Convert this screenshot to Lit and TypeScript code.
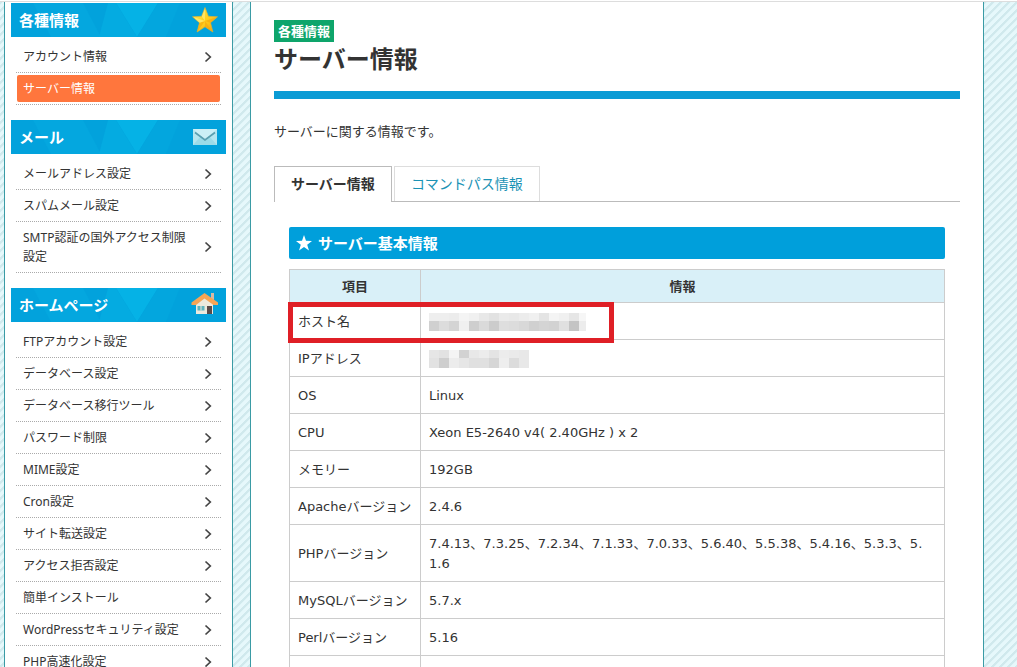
import { LitElement, html, svg, css } from "lit";
import { customElement, state } from "lit/decorators.js";
import { classMap } from "lit/directives/class-map.js";

const chevron = html`<svg class="chevron" viewBox="0 0 8 12" aria-hidden="true"><path d="M1.5 1.5 6.3 6 1.5 10.5" fill="none" stroke="#444" stroke-width="1.7"/></svg>`;

const icons: Record<string, unknown> = {
  star: html`<svg class="icon" viewBox="0 0 28 28" aria-hidden="true">
    <defs><linearGradient id="gold" x1="0" y1="0" x2="1" y2="1"><stop offset="0" stop-color="#ffe95a"/><stop offset=".5" stop-color="#ffd21f"/><stop offset="1" stop-color="#f59a0c"/></linearGradient></defs>
    <path d="M14 1.5 17.4 10.3 26.5 10.8 19.5 16.7 21.9 26 14 20.8 6.1 26 8.5 16.7 1.5 10.8 10.6 10.3Z" fill="url(#gold)" stroke="#d9b13a" stroke-width=".7"/>
    <path d="M14 15 26 11 19.5 16.7Z M14 15 21.9 26 14 20.8Z M14 15 6.1 26 8.5 16.7Z" fill="#f6a80f" opacity=".65"/>
    <path d="M14 15V2.5L10.8 10.5Z M14 15 2.5 11 8.5 16.7Z" fill="#fff08a" opacity=".6"/></svg>`,
  mail: html`<svg class="icon" viewBox="0 0 28 28" aria-hidden="true">
    <path d="M2 6h24v16H2Z" fill="#b5e6f0"/><path d="M2 22 10 13h8l8 9Z" fill="#9ddbe8"/>
    <path d="M2 6h24L14 16.500Z" fill="#cbeff6"/><path d="M4 9.500 14 17l10-7.500" fill="none" stroke="#5a9fb0" stroke-width="1.600"/></svg>`,
  house: html`<svg class="icon" viewBox="0 0 28 28" aria-hidden="true">
    <path d="M20 2h3v9h-3Z" fill="#d9b9a4"/><path d="M5 13 14 6l8 7v10H5Z" fill="#ece9dd"/>
    <path d="M13.500 2 27 11.500V14h-4.500L13.500 7.500 5 14H.500V11.500Z" fill="#f6a556"/>
    <path d="M6.500 15h7v4.500h-7Z" fill="#5fb3bd"/><path d="M9.500 15h1v4.500h-1Z" fill="#ece9dd"/><path d="M16 15h5v8h-5Z" fill="#5a4a48"/></svg>`,
};

interface Group { title: string; icon: string; items: string[] }

const groups: Group[] = [
  { title: "各種情報", icon: "star", items: ["アカウント情報", "サーバー情報"] },
  { title: "メール", icon: "mail", items: ["メールアドレス設定", "スパムメール設定", "SMTP認証の国外アクセス制限設定"] },
  {
    title: "ホームページ", icon: "house",
    items: ["FTPアカウント設定", "データベース設定", "データベース移行ツール", "パスワード制限", "MIME設定", "Cron設定",
      "サイト転送設定", "アクセス拒否設定", "簡単インストール", "WordPressセキュリティ設定", "PHP高速化設定"],
  },
];

@customElement("side-menu")
class SideMenu extends LitElement {
  static styles = css`
    :host { display: block; }
    .group { margin-bottom: 15px; }
    .title {
      position: relative; display: flex; align-items: center; justify-content: space-between;
      height: 34px; margin: 0; padding: 0 7px 0 8px; box-sizing: border-box; background: #02a2dc;
      color: #fff; font-size: 15px; font-weight: 700; line-height: 24px;
    }
    .facets { position: absolute; inset: 0; width: 100%; height: 100%; }
    .label, .icon { position: relative; }
    .icon { width: 28px; height: 28px; }
    .list { list-style: none; margin: 0; padding: 4px 5px 0; }
    .item { padding: 2px 1px; border-bottom: 1px dotted #aaa; }
    .link {
      display: flex; align-items: center; justify-content: space-between; gap: 12px;
      padding: 4px 8px 4px 6px; border-radius: 2px; color: #333; text-decoration: none;
      font-size: 12px; line-height: 19px;
    }
    .current { background: #ff763d; color: #fff; }
    .chevron { width: 8px; height: 12px; flex: none; }
  `;

  render() {
    return groups.map((g) => html`
      <section class="group">
        <h2 class="title">
          <svg class="facets" viewBox="0 0 215 34" preserveAspectRatio="none" aria-hidden="true">
            <path d="M22 0h50l18 34H40Z" fill="#04a7df"/>
            <path d="M105 0h42l-21 34Z" fill="#05b2e6"/>
            <path d="M105 0h-8L88 34h38Z" fill="#04abe1"/>
            <path d="M147 0h22l-14 34h-29Z" fill="#03a6de"/>
          </svg>
          <span class="label">${g.title}</span>${icons[g.icon]}
        </h2>
        <ul class="list">
          ${g.items.map((t) => {
            const current = t === "サーバー情報";
            return html`<li class="item"><a href="#" class=${classMap({ link: true, current })}>${t}${current ? "" : chevron}</a></li>`;
          })}
        </ul>
      </section>`);
  }
}

type Tone = number[];
const hostTones: Tone[] = [
  [238, 238, 236, 244, 240, 232, 226, 234, 232, 236, 240, 228, 244, 240, 230, 246],
  [208, 220, 212, 240, 206, 218, 204, 222, 220, 216, 208, 212, 210, 224, 196, 236],
];
const ipTones: Tone[] = [
  [230, 226, 244, 210, 232, 236, 228, 236, 234, 232],
  [226, 206, 236, 230, 224, 224, 214, 238, 220, 232],
];

const masked = (tones: Tone[], label: string, width: number) => html`
  <svg class="mask" role="img" aria-label=${label} width=${width} height="18">
    ${tones.map((r, y) => r.map((v, x) => svg`<rect x=${x * 10} y=${y * 8} width="10" height=${y ? 10 : 8} fill="rgb(${v},${v},${v})"/>`))}
  </svg>`;

const rows: [string, unknown][] = [
  ["ホスト名", masked(hostTones, "ホスト名", 157)],
  ["IPアドレス", masked(ipTones, "IPアドレス", 100)],
  ["OS", "Linux"],
  ["CPU", "Xeon E5-2640 v4( 2.40GHz ) x 2"],
  ["メモリー", "192GB"],
  ["Apacheバージョン", "2.4.6"],
  ["PHPバージョン", "7.4.13、7.3.25、7.2.34、7.1.33、7.0.33、5.6.40、5.5.38、5.4.16、5.3.3、5.1.6"],
  ["MySQLバージョン", "5.7.x"],
  ["Perlバージョン", "5.16"],
  ["", ""],
];

@customElement("app-root")
class AppRoot extends LitElement {
  @state() private tab = 0;

  static styles = css`
    :host {
      display: block; height: 100vh; overflow: hidden; box-sizing: border-box; padding-top: 1px;
      color: #333; font-family: "Noto Sans", "Noto Sans CJK JP", sans-serif;
    }
    .page {
      display: grid; grid-template-columns: 229px minmax(0, 1fr); gap: 17px; height: 100%;
      box-sizing: border-box; padding: 0 33px 0 4px; border-top: 1px solid #ddd;
      background: linear-gradient(135deg, #d0e9ed 0 14%, #e6f8fb 20% 44%, #d0e9ed 50% 64%, #e6f8fb 70% 94%, #d0e9ed) 0 0 / 8px 8px;
    }
    .side, .main { background: #fff; border: solid #3a9ba5; border-width: 0 1px; }
    .side { padding: 1px 6px 0; }
    .main { padding: 18px 23px 0; }
    .badge {
      display: table; padding: 0 4px; background: #0ea56b; color: #fff;
      font-size: 13px; font-weight: 700; line-height: 22px;
    }
    .heading { margin: 0; padding-bottom: 15px; border-bottom: 8px solid #0a9bd5; font-size: 24px; line-height: 34px; }
    .intro { margin: 22px 0 25px; font-size: 13px; line-height: 20px; }
    .tabs { display: flex; gap: 2px; height: 36px; box-sizing: border-box; border-bottom: 1px solid #bbb; }
    .tab {
      height: 35px; padding: 0 16px; border: 1px solid #ddd; border-bottom: 0; background: #fff;
      color: #1b93b5; font: 400 14px/20px "Noto Sans", "Noto Sans CJK JP", sans-serif; cursor: pointer;
    }
    .selected { height: 36px; padding-bottom: 2px; border-color: #bbb; color: #333; font-weight: 700; }
    .panel { padding: 25px 15px 0; }
    .bar {
      display: flex; align-items: center; gap: 6px; height: 32px; margin: 0 0 10px; padding: 0 7px;
      box-sizing: border-box; border-radius: 2px; background: #009fdb; color: #fff; font-size: 15px; line-height: 22px;
    }
    .star { width: 16px; height: 16px; }
    .table {
      width: 100%; border-collapse: collapse; font-family: "DejaVu Sans", "Noto Sans CJK JP", sans-serif;
      font-size: 13px; line-height: 20px;
    }
    .table th, .table td {
      padding: 9px 8px 7px; border: 1px solid #ccc; text-align: left; font-weight: 400; word-break: break-all;
    }
    .table td { padding-right: 16px; }
    .table thead th { padding: 7px 8px 5px; background: #d9f0f8; text-align: center; font-weight: 700; }
    .table .name { width: 114px; white-space: nowrap; }
    .mask { display: block; }
    .marked { position: relative; }
    .marker { position: absolute; left: -2px; top: -1px; width: 316px; height: 31px; border: 5px solid #df1f26; pointer-events: none; }
  `;

  render() {
    return html`
      <div class="page">
        <nav class="side"><side-menu></side-menu></nav>
        <main class="main">
          <span class="badge">各種情報</span>
          <h1 class="heading">サーバー情報</h1>
          <p class="intro">サーバーに関する情報です。</p>
          <div class="tabs" role="tablist">
            ${["サーバー情報", "コマンドパス情報"].map((t, i) => html`
              <button role="tab" aria-selected=${this.tab === i} class=${classMap({ tab: true, selected: this.tab === i })}
                @click=${() => (this.tab = i)}>${t}</button>`)}
          </div>
          <section class="panel">
            <h2 class="bar">
              <svg class="star" viewBox="0 0 16 16" aria-hidden="true"><path d="M8 0 10 5.800 16 6 11.200 9.700 13 15.600 8 12.100 3 15.600 4.800 9.700 0 6 6 5.800Z" fill="#fff"/></svg>
              サーバー基本情報
            </h2>
            <table class="table">
              <thead><tr><th class="name" scope="col">項目</th><th scope="col">情報</th></tr></thead>
              <tbody>
                ${rows.map(([k, v], i) => html`<tr class=${i ? "" : "marked"}>
                  <th class="name" scope="row">${k}${i ? "" : html`<span class="marker"></span>`}</th><td>${v}</td></tr>`)}
              </tbody>
            </table>
          </section>
        </main>
      </div>`;
  }
}
